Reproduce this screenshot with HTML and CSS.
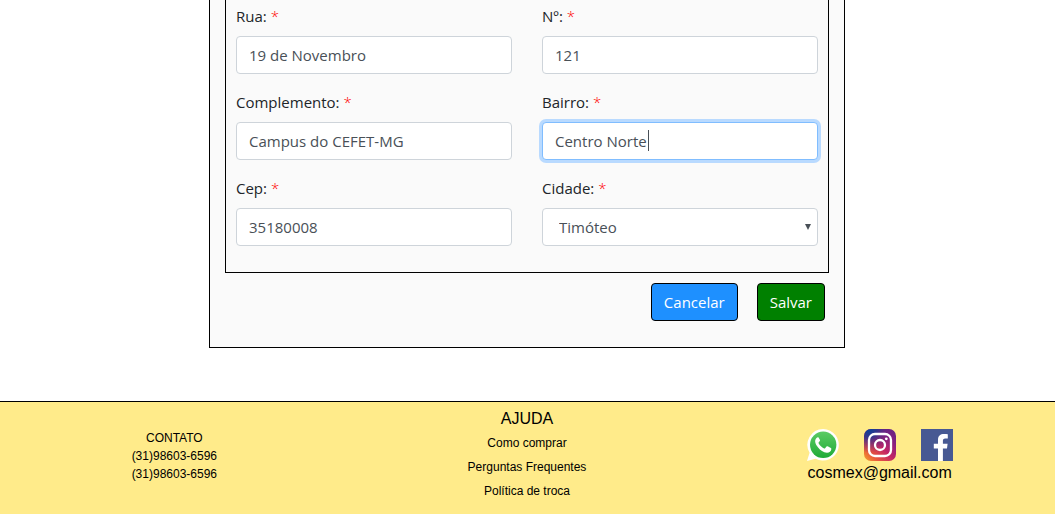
FILE: index.html
```html
<!DOCTYPE html>
<html lang="pt-BR">
<head>
<meta charset="utf-8">
<meta name="viewport" content="width=device-width, initial-scale=1">
<title>Cosmex</title>
<link rel="stylesheet" href="styles.css">
</head>
<body>
<main class="page">
  <form class="card">
    <div class="address">
      <div class="field">
        <label for="rua">Rua: <span class="required">*</span></label>
        <input class="control" id="rua" type="text" value="19 de Novembro">
      </div>
      <div class="field">
        <label for="numero">Nº: <span class="required">*</span></label>
        <input class="control" id="numero" type="text" value="121">
      </div>
      <div class="field">
        <label for="complemento">Complemento: <span class="required">*</span></label>
        <input class="control" id="complemento" type="text" value="Campus do CEFET-MG">
      </div>
      <div class="field">
        <label for="bairro">Bairro: <span class="required">*</span></label>
        <div class="control-box">
          <input class="control control-active" id="bairro" type="text" value="Centro Norte">
          <span class="caret"></span>
        </div>
      </div>
      <div class="field">
        <label for="cep">Cep: <span class="required">*</span></label>
        <input class="control" id="cep" type="text" value="35180008">
      </div>
      <div class="field">
        <label for="cidade">Cidade: <span class="required">*</span></label>
        <div class="control-box">
          <select class="control select" id="cidade"><option>Timóteo</option></select>
          <svg class="arrow" viewBox="0 0 6 6"><path d="M0 0h6L3 6z" fill="#495057"/></svg>
        </div>
      </div>
    </div>
    <div class="actions">
      <button class="btn btn-cancel" type="button">Cancelar</button>
      <button class="btn btn-save" type="submit">Salvar</button>
    </div>
  </form>
</main>
<footer class="footer">
  <div class="contact">
    <div>CONTATO</div>
    <div>(31)98603-6596</div>
    <div>(31)98603-6596</div>
  </div>
  <nav class="help">
    <div class="help-title">AJUDA</div>
    <a href="#">Como comprar</a>
    <a href="#">Perguntas Frequentes</a>
    <a href="#">Política de troca</a>
  </nav>
  <div class="social">
    <div class="icons">
      <a href="#" aria-label="WhatsApp">
        <svg class="icon" viewBox="0 0 32 32">
          <defs><linearGradient id="wa" x1="0" y1="0" x2="0" y2="1"><stop offset="0" stop-color="#5bcb64"/><stop offset="1" stop-color="#20ab38"/></linearGradient></defs>
          <path d="M16.2 0A15.8 15.8 0 0 0 2.6 23.8L0 32l8.5-2.3A15.8 15.8 0 1 0 16.2 0z" fill="#fff"/>
          <circle cx="16.2" cy="15.8" r="13.2" fill="url(#wa)"/>
          <path d="M10.9 8.3c-.5 0-1 .2-1.4.7-2.6 2.7-1 6.3 1.4 9.2 2.5 3.1 5.4 5.3 9 5.5 2.3.1 4.2-1.4 4.4-3.5.1-.6 0-1-.4-1.2l-3.3-1.7c-.4-.2-.8-.1-1.1.3l-1.4 1.6c-.3.3-.6.4-1 .2-2.4-1.1-4.2-2.7-5.5-5.1-.2-.4-.1-.7.2-1l1-1.2c.2-.3.3-.6.2-1L11.7 8.800c-.2-.4-.4-.5-.8-.5z" fill="#fff"/>
        </svg>
      </a>
      <a href="#" aria-label="Instagram">
        <svg class="icon" viewBox="0 0 32 32">
          <defs>
            <linearGradient id="ig" x1="0" y1="1" x2="1" y2="0"><stop offset="0" stop-color="#f5a52a"/><stop offset=".22" stop-color="#e9583c"/><stop offset=".5" stop-color="#c22466"/><stop offset=".75" stop-color="#872080"/><stop offset="1" stop-color="#5b2484"/></linearGradient>
            <radialGradient id="igb" cx=".15" cy="0" r=".75"><stop offset="0" stop-color="#06429a"/><stop offset=".35" stop-color="#24378e" stop-opacity=".9"/><stop offset="1" stop-color="#6a2080" stop-opacity="0"/></radialGradient>
          </defs>
          <rect width="32" height="32" rx="7" fill="url(#ig)"/>
          <rect width="32" height="32" rx="7" fill="url(#igb)"/>
          <rect x="5" y="5" width="22" height="22" rx="6" fill="none" stroke="#fff" stroke-width="2.3"/>
          <circle cx="16" cy="16" r="5" fill="none" stroke="#fff" stroke-width="2.3"/>
          <circle cx="22.3" cy="9.8" r="1.4" fill="#fff"/>
        </svg>
      </a>
      <a href="#" aria-label="Facebook">
        <svg class="icon" viewBox="0 0 32 32">
          <rect width="32" height="32" fill="#475993"/>
          <path d="M17 32V19.500h-4.200v-4.800H17v-3.800C17 7 19.300 5 23 5c1.700 0 3 .1 3.800.2v4.300h-2.500c-2 0-2.400 1-2.400 2.300v2.900h4.700l-.6 4.800h-4.100V32z" fill="#fff"/>
        </svg>
      </a>
    </div>
    <div class="email">cosmex@gmail.com</div>
  </div>
</footer>
</body>
</html>
```
FILE: styles.css
```css
* { box-sizing: border-box; }

body {
  margin: 0;
  min-height: 100vh;
  display: flex;
  flex-direction: column;
  background: #fff;
  color: #212529;
  font: 15px/24px "Open Sans", "Noto Sans", sans-serif;
}

.page { padding-right: 1px; }

.card {
  max-width: 636px;
  margin: 0 auto 53px;
  padding: 0 15px 26px;
  background: #fafafa;
  border: 1px solid #000;
  border-top: 0;
}

.address {
  display: grid;
  grid-template-columns: 1fr 1fr;
  gap: 16px 30px;
  padding: 4px 10px 26px;
  border: 1px solid #000;
  border-top: 0;
}

.field {
  display: flex;
  flex-direction: column;
  gap: 8px;
  min-width: 0;
}

.required {
  color: #f00;
  font-weight: 300;
}

.control {
  display: block;
  width: 100%;
  height: 38px;
  padding: 6px 12px;
  font: inherit;
  color: #495057;
  background: #fff;
  border: 1px solid #ced4da;
  border-radius: 4px;
  outline: 0;
}

.control-active,
.control:focus {
  border-color: #80bdff;
  box-shadow: 0 0 0 3px #b9daff;
}

.select {
  appearance: none;
  padding: 6px 16px;
}

.control-box { position: relative; }

.caret {
  position: absolute;
  left: 106px;
  top: 8px;
  width: 1px;
  height: 21px;
  background: #495057;
}

.arrow {
  position: absolute;
  right: 7px;
  top: 16px;
  width: 6px;
  height: 6px;
  pointer-events: none;
}

.actions {
  display: flex;
  justify-content: flex-end;
  gap: 19px;
  padding: 10px 4px 0 0;
}

.btn {
  padding: 6px 12px;
  font: inherit;
  color: #fff;
  border: 1px solid #000;
  border-radius: 4px;
}

.btn-cancel { background: #1e90ff; }
.btn-save { background: #008000; }

.footer {
  flex: 1;
  display: grid;
  grid-template-columns: repeat(3, 1fr);
  gap: 4px;
  padding-right: 1px;
  background: #ffeb8a;
  border-top: 1px solid #000;
  color: #000;
  font: 12px/18px "Liberation Sans", Arial, sans-serif;
  text-align: center;
}

.footer a {
  color: inherit;
  text-decoration: none;
}

.contact { padding-top: 27px; }

.help {
  display: flex;
  flex-direction: column;
  align-items: center;
  padding-top: 5px;
  line-height: 24px;
}

.help-title { font-size: 16px; }

.social { padding-top: 27px; }

.icons {
  display: flex;
  justify-content: center;
  gap: 25px;
}

.icon {
  display: block;
  width: 32px;
  height: 32px;
}

.email {
  font-size: 16px;
  line-height: 24px;
}
```
